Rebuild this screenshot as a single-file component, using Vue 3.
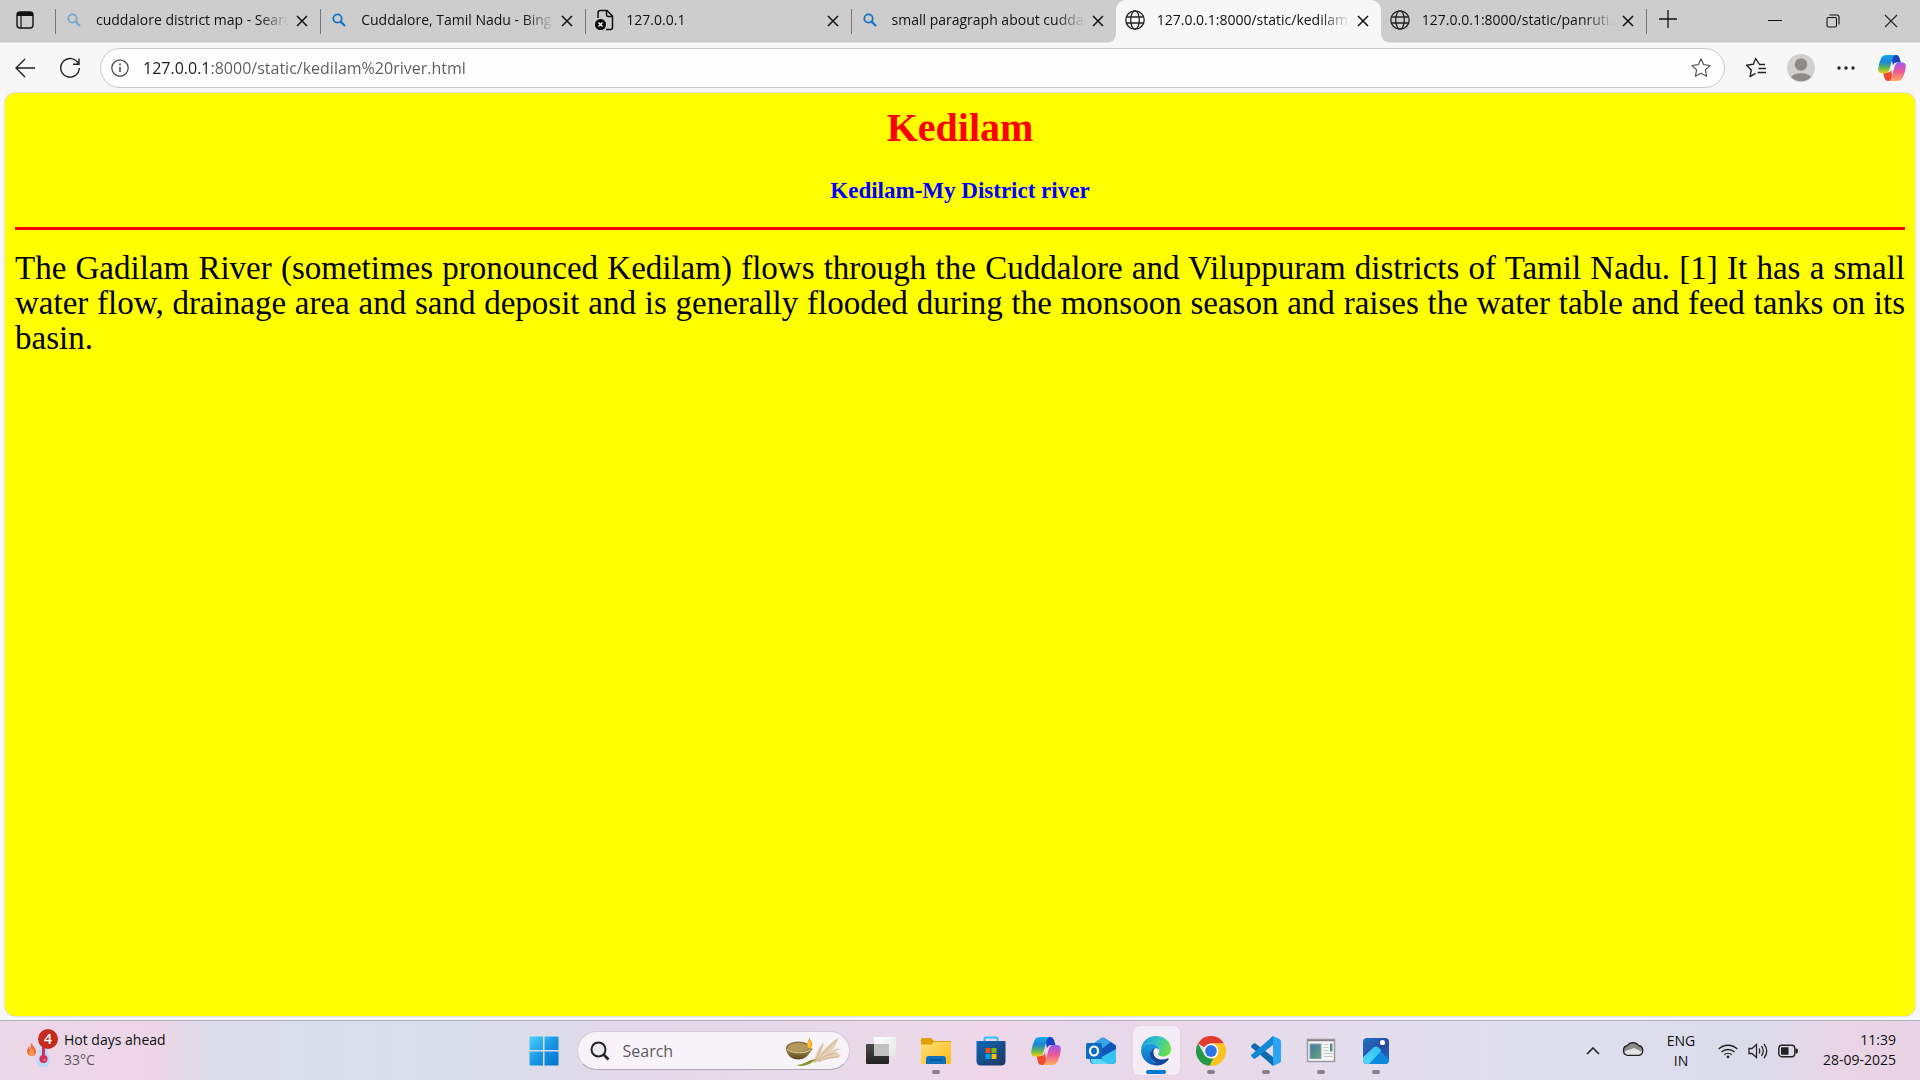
<script setup>
import { ref } from 'vue'

const tabs = [
  { id: 1, title: 'cuddalore district map - Search', icon: 'search', faded: true },
  { id: 2, title: 'Cuddalore, Tamil Nadu - Bing Maps', icon: 'search' },
  { id: 3, title: '127.0.0.1', icon: 'error' },
  { id: 4, title: 'small paragraph about cuddalore', icon: 'search' },
  { id: 5, title: '127.0.0.1:8000/static/kedilam river', icon: 'globe', active: true },
  { id: 6, title: '127.0.0.1:8000/static/panruti.html', icon: 'globe' },
]
const address = ref('127.0.0.1:8000/static/kedilam%20river.html')
const query = ref('')
</script>

<template>
  <div class="desktop">
    <header class="tabstrip">
      <button class="workspace" aria-label="Tab actions">
        <svg width="18" height="18" viewBox="0 0 18 18">
          <rect x="1" y="1" width="16" height="16" rx="3" fill="none" stroke="#111" stroke-width="1.4" />
          <path d="M1 5V4a3 3 0 0 1 3-3h10a3 3 0 0 1 3 3v1z" fill="#111" />
          <path d="M5 5v12" stroke="#111" stroke-width="1.2" />
        </svg>
      </button>
      <div class="tabs">
        <div v-for="tab in tabs" :key="tab.id" class="tab" :class="{ active: tab.active }">
          <button class="tab-main">
            <span class="favicon">
              <svg v-if="tab.icon === 'search'" :class="{ faded: tab.faded }" width="14" height="14" viewBox="0 0 14 14">
                <circle cx="5.5" cy="5.5" r="4.2" fill="none" stroke="#1473c8" stroke-width="1.8" />
                <path d="M8.6 8.6 13 13" stroke="#1473c8" stroke-width="2.2" />
              </svg>
              <svg v-else-if="tab.icon === 'error'" width="20" height="22" viewBox="0 0 20 22">
                <path d="M4 9V4a2.5 2.5 0 0 1 2.500-2.500H13L18.500 7v11.500a2 2 0 0 1-2 2H12M12.500 1.500V5.500a2 2 0 0 0 2 2h4" fill="none" stroke="#111" stroke-width="1.5" />
                <circle cx="6.500" cy="15.500" r="5.500" fill="#000" />
                <path d="m4.500 13.500 4 4m0-4-4 4" stroke="#fff" stroke-width="1.5" />
              </svg>
              <svg v-else width="20" height="20" viewBox="0 0 20 20" fill="none" stroke="#222" stroke-width="1.3">
                <circle cx="10" cy="10" r="9.200" />
                <ellipse cx="10" cy="10" rx="4.300" ry="9.200" />
                <path d="M1.500 7h17M1.500 13h17" />
              </svg>
            </span>
            <span class="title">{{ tab.title }}</span>
          </button>
          <button class="close" aria-label="Close tab">
            <svg width="12" height="12" viewBox="0 0 12 12"><path d="m1 1 10 10M11 1 1 11" stroke="#111" stroke-width="1.5" /></svg>
          </button>
        </div>
      </div>
      <button class="new-tab" aria-label="New tab">
        <svg width="18" height="18" viewBox="0 0 18 18"><path d="M9 0v18M0 9h18" stroke="#111" stroke-width="1.300" /></svg>
      </button>
      <div class="window-controls">
        <button aria-label="Minimize"><svg width="14" height="14" viewBox="0 0 14 14"><path d="M0 6.500h14" stroke="#111" /></svg></button>
        <button aria-label="Restore">
          <svg width="14" height="14" viewBox="0 0 14 14" fill="none" stroke="#111" stroke-width="1.100">
            <rect x="1" y="3.500" width="9.500" height="9.500" rx="1.500" />
            <path d="M3.500 1H11a2 2 0 0 1 2 2v7.500" />
          </svg>
        </button>
        <button aria-label="Close"><svg width="14" height="14" viewBox="0 0 14 14"><path d="m1 1 12 12M13 1 1 13" stroke="#222" stroke-width="1.100" /></svg></button>
      </div>
    </header>

    <nav class="toolbar">
      <button class="nav-button" aria-label="Back">
        <svg width="22" height="20" viewBox="0 0 22 20"><path d="M11 1 2 10l9 9M2 10h19" fill="none" stroke="#222" stroke-width="1.400" /></svg>
      </button>
      <button class="nav-button reload" aria-label="Refresh">
        <svg width="22" height="22" viewBox="0 0 22 22" fill="none" stroke="#222" stroke-width="1.400">
          <path d="M19.500 7A9.300 9.300 0 1 0 20.300 11M20 1.500V7.300h-6" />
        </svg>
      </button>
      <form class="address" @submit.prevent>
        <button type="button" class="plain" aria-label="View site information">
          <svg width="18" height="18" viewBox="0 0 18 18">
            <circle cx="9" cy="9" r="8.200" fill="none" stroke="#444" stroke-width="1.200" />
            <path d="M9 8v5M9 4.500v1.800" stroke="#444" stroke-width="1.500" />
          </svg>
        </button>
        <input v-model="address" class="url" type="text" aria-label="Address" spellcheck="false" />
        <button type="button" class="plain" aria-label="Add to favorites">
          <svg width="22" height="22" viewBox="0 0 22 22"><path d="m11 1.800 2.700 5.900 6.400.8-4.700 4.400 1.200 6.400L11 16.200l-5.600 3.100 1.200-6.400L1.900 8.500l6.400-.8z" fill="none" stroke="#555" stroke-width="1.200" stroke-linejoin="round" /></svg>
        </button>
      </form>
      <div class="tools">
        <button aria-label="Favorites">
          <svg width="22" height="22" viewBox="0 0 22 22" fill="none" stroke="#222" stroke-width="1.400" stroke-linejoin="round">
            <path d="M20 7.500h-5.500L10.700 1.500 8.300 7.300 1.500 8.200l4.800 4.700-1.200 6.700 5.400-3.200M13.500 11.500H21M12.500 15.500H21" />
          </svg>
        </button>
        <button aria-label="Profile">
          <svg width="28" height="28" viewBox="0 0 28 28">
            <circle cx="14" cy="14" r="14" fill="#d2d0ce" />
            <circle cx="14" cy="10.500" r="6.200" fill="#8d8b88" />
            <path d="M4 23a11 6.500 0 0 1 20 0 14 14 0 0 1-20 0z" fill="#8d8b88" />
          </svg>
        </button>
        <button aria-label="Settings and more">
          <svg width="18" height="4" viewBox="0 0 18 4" fill="#222"><circle cx="2" cy="2" r="1.700" /><circle cx="9" cy="2" r="1.700" /><circle cx="16" cy="2" r="1.700" /></svg>
        </button>
        <button class="copilot" aria-label="Copilot"><svg width="28" height="28" viewBox="0 0 30 30"><use href="#copilot-mark" /></svg></button>
      </div>
    </nav>

    <main class="page">
      <h1>Kedilam</h1>
      <h3>Kedilam-My District river</h3>
      <hr />
      <p>
        The Gadilam River (sometimes pronounced Kedilam) flows through the Cuddalore and Viluppuram districts of
        Tamil Nadu. [1] It has a small water flow, drainage area and sand deposit and is generally flooded during the
        monsoon season and raises the water table and feed tanks on its basin.
      </p>
    </main>

    <footer class="taskbar">
      <button class="weather">
        <span class="weather-icon">
          <svg width="34" height="38" viewBox="0 0 34 38">
            <path d="M5 15c1 1 0 3 1 3s0-5 2-6c0 3 4 5 4 8.500S10 25 7.500 25 3 23 3 20.500 4.500 17 5 15z" fill="#f26a3d" />
            <path d="M7.500 17c.5 2 2.500 3 2.500 5s-1 3-2.500 3S5 24 5 22s2-3 2.500-5z" fill="#ffa04a" />
            <path d="M15 24V8a4.500 4.500 0 0 1 9 0v16a7 7 0 1 1-9 0z" fill="#b9daf8" />
            <path d="M18 25V9h3v16z" fill="#d92b58" />
            <circle cx="19.500" cy="28" r="4" fill="#d92b58" />
            <circle cx="20.500" cy="29" r="1" fill="#ffa0b0" />
          </svg>
          <span class="badge">4</span>
        </span>
        <span class="lines"><span>Hot days ahead</span><span class="muted">33°C</span></span>
      </button>

      <div class="apps">
        <button class="app" aria-label="Start">
          <svg width="30" height="30" viewBox="0 0 30 30">
            <defs><linearGradient id="win" x1="0" y1="0" x2="1" y2="1"><stop offset="0" stop-color="#4cd0fb" /><stop offset=".55" stop-color="#1593e2" /><stop offset="1" stop-color="#0272cf" /></linearGradient></defs>
            <path d="M1.500.500H14V14H.500V1.500a1 1 0 0 1 1-1zM15.500.500h13a1 1 0 0 1 1 1V14h-14zM.500 15.500H14v14H1.500a1 1 0 0 1-1-1zM15.500 15.500h14v13a1 1 0 0 1-1 1h-13z" fill="url(#win)" />
          </svg>
        </button>
        <label class="search">
          <svg width="20" height="20" viewBox="0 0 20 20"><circle cx="8.500" cy="8.500" r="7" fill="#e9e9ef" stroke="#222" stroke-width="2" /><path d="m13.500 13.500 5 5" stroke="#222" stroke-width="2.600" /></svg>
          <input v-model="query" type="search" placeholder="Search" aria-label="Search" />
          <svg width="56" height="32" viewBox="0 0 56 32">
            <defs><linearGradient id="bowl" x1="0" y1="0" x2="0" y2="1"><stop offset="0" stop-color="#b79b5c" /><stop offset="1" stop-color="#594618" /></linearGradient></defs>
            <path d="M27 28c3-7 4-16 11-21-1 5-2 8-3 11C39 13 46 7 52 2c0 6-3 10-7 14 4-3 8-3 10-2-3 1-5 2-7 4 3 0 6 1 7 3-9 4-17 2-23 6z" fill="#e7d1b6" />
            <path d="M29 27c3-7 5-12 8-17M31 26c6-9 13-15 20-21M32 26c6-5 14-8 20-8M33 27c7-4 14-5 20-5" fill="none" stroke="#c2a17e" stroke-width=".7" />
            <path d="M10 30c8 0 12-5 20-6-4 4-9 7-16 7z" fill="#879020" />
            <ellipse cx="12.500" cy="13" rx="12.500" ry="6.500" fill="#85713a" />
            <path d="M0 13c0 7 6 11.500 12 11.500S22 21 25 16l2-2-4-2c-5 4-17 5-23 1z" fill="url(#bowl)" />
            <ellipse cx="12" cy="12.500" rx="10" ry="4.500" fill="#b39a5c" />
            <path d="M1 14c6 5 17 5 23 1" fill="none" stroke="#e3d5a0" />
            <path d="M23 2c2 4 4 6 3 9-1 3-4 3-5 0-.5-3 2-5 2-9z" fill="#ff9b12" />
            <path d="M23.500 6c1 3 1 5 0 7-2-2-1-4 0-7z" fill="#ffe04a" />
          </svg>
        </label>
        <button class="app" aria-label="Task view">
          <svg width="30" height="30" viewBox="0 0 30 30">
            <defs>
              <linearGradient id="tvDark" x1="0" y1="0" x2="0" y2="1"><stop offset="0" stop-color="#4c4c4c" /><stop offset="1" stop-color="#222" /></linearGradient>
              <linearGradient id="tvLight" x1="0" y1="0" x2="1" y2="1"><stop offset="0" stop-color="#fff" /><stop offset="1" stop-color="#e4e4e4" /></linearGradient>
            </defs>
            <rect x="0" y="8" width="23" height="20" rx="1" fill="url(#tvDark)" />
            <rect x="8" y="1" width="22" height="19" rx="1" fill="url(#tvLight)" />
            <path d="M8 8h15v12H8z" fill="#c1c1c1" />
          </svg>
        </button>
        <button class="app running" aria-label="File Explorer">
          <svg width="30" height="30" viewBox="0 0 30 30">
            <defs><linearGradient id="folder" x1="0" y1="0" x2="1" y2="1"><stop offset="0" stop-color="#ffdf78" /><stop offset="1" stop-color="#fdbb17" /></linearGradient></defs>
            <path d="M0 3.500Q0 2 1.500 2H10l3 3h17v8H0z" fill="#e0a100" />
            <path d="M0 8.500h10.500L13 6h17v20.500Q30 28 28.500 28h-27Q0 28 0 26.500z" fill="url(#folder)" />
            <path d="M5 28v-5q0-3 3-3h14q3 0 3 3v5z" fill="#0f70bf" />
            <path d="M8.500 24h13" stroke="#0b4f93" stroke-width="1.300" />
          </svg>
        </button>
        <button class="app" aria-label="Microsoft Store">
          <svg width="30" height="30" viewBox="0 0 30 30">
            <defs><linearGradient id="store" x1="0" y1="0" x2="1" y2="1"><stop offset="0" stop-color="#0c69ba" /><stop offset="1" stop-color="#20345e" /></linearGradient></defs>
            <path d="M8.500 7V3q0-1.500 1.500-1.500h10q1.500 0 1.500 1.500v4" fill="none" stroke="#31c1f5" stroke-width="2" />
            <path d="M.500 5h29v20q0 4.500-4.500 4.500H5q-4.500 0-4.500-4.500z" fill="url(#store)" />
            <path d="M9.500 12h5v5h-5z" fill="#f25022" /><path d="M15.500 12h5v5h-5z" fill="#7fba00" />
            <path d="M9.500 18h5v5h-5z" fill="#00a4ef" /><path d="M15.500 18h5v5h-5z" fill="#ffb900" />
          </svg>
        </button>
        <button class="app" aria-label="Copilot">
          <svg width="30" height="30" viewBox="0 0 30 30">
            <defs>
              <linearGradient id="cpA" x1="0" y1="0" x2="0" y2="1"><stop offset="0" stop-color="#18a9ee" /><stop offset=".4" stop-color="#1c86d4" /><stop offset=".72" stop-color="#66b84c" /><stop offset="1" stop-color="#f3cf16" /></linearGradient>
              <linearGradient id="cpB" x1="0" y1="0" x2="0" y2="1"><stop offset="0" stop-color="#9a5cf0" /><stop offset=".5" stop-color="#ef5a94" /><stop offset="1" stop-color="#ffae62" /></linearGradient>
              <g id="copilot-mark">
                <path d="M14 1h5.500q2.500 0 3.300 2.500L24.500 9H20q-3 0-4 3.500z" fill="#1a43c4" />
                <path d="M16 29h-5.500q-2.500 0-3.300-2.500L5.500 20H10q3 0 4-3.500z" fill="#ee4a2e" />
                <path d="M9.500 1h9q-2 .8-2.700 3.300L12.500 16q-1 4-4.500 4.500H4q-4.500 0-3.700-5.500Q1.200 9 3.500 4 5 1 9.500 1z" fill="url(#cpA)" />
                <path d="M20.500 29h-9q2-.8 2.700-3.300L17.500 14q1-4.500 4.500-5h4q4.500 0 3.700 5.500-.9 6-3.200 11Q25 29 20.500 29z" fill="url(#cpB)" />
              </g>
            </defs>
            <use href="#copilot-mark" />
          </svg>
        </button>
        <button class="app" aria-label="Outlook">
          <svg width="30" height="30" viewBox="0 0 30 30">
            <path d="M4 10 15.500 2q1.500-1 3 0L30 9.500V24q0 4-4 4H8q-4 0-4-4z" fill="#1272c8" />
            <path d="M6 9 17 1.500 27 7.500 13 17z" fill="#3aa5ea" />
            <path d="m14 14 11-8 5 4v4L14 24z" fill="#0f55b5" />
            <path d="M30 13 12 23l4 5h10q4 0 4-4z" fill="#35c1f1" />
            <path d="m5 19 18 9H9q-4 0-4-4z" fill="#5cd8fb" />
            <rect x="0" y="7" width="16" height="16" rx="1.500" fill="#0d6cc4" />
            <ellipse cx="8" cy="15" rx="4" ry="4.500" fill="none" stroke="#fff" stroke-width="2.200" />
          </svg>
        </button>
        <button class="app running current" aria-label="Microsoft Edge">
          <svg width="30" height="30" viewBox="0 0 30 30">
            <defs>
              <linearGradient id="edA" x1="0" y1="0" x2="1" y2=".3"><stop offset="0" stop-color="#1796d8" /><stop offset=".5" stop-color="#2fbfcb" /><stop offset="1" stop-color="#67df54" /></linearGradient>
              <linearGradient id="edB" x1="0" y1="0" x2="0" y2="1"><stop offset="0" stop-color="#1ba1de" /><stop offset="1" stop-color="#0b63bd" /></linearGradient>
            </defs>
            <path d="M0 14C0 6 7 0 15 0c9 0 15 6 15 13 0 5-4 7.500-8 7.500-3 0-5-1-5-2.500 0-1 1.500-1.500 1.500-4C18.500 11 15 7.500 10 7.500 5 7.500 1.500 10 0 14z" fill="url(#edA)" />
            <path d="M0 14.500C1.500 9 6 7.500 10 7.500c5 0 8.500 3.500 8.500 6.500-1-2-6-3-8 1-3 6 2 13 9 13.500A15 15 0 0 1 0 14.500z" fill="url(#edB)" />
            <path d="M11 13.500c-3 8 3 13.500 9 13.500 4 0 6-2 7.500-3.500.5-.8 0-1.500-1-1-8 3-14.500-1-14.500-6 0-2 1-3 2-4-1 0-2.500 0-3 1zM12 28c4 3 12 1 15.500-5" fill="#12489b" />
            <path d="M9 16c-1 6 4 12 11 12 4-1 6.500-3 7.500-5-8 4-16 0-15-8z" fill="#12489b" />
          </svg>
        </button>
        <button class="app running" aria-label="Google Chrome">
          <svg width="30" height="30" viewBox="0 0 30 30">
            <path d="M15 15 2 7.500A15 15 0 0 1 28 7.500H15z" fill="#e33b2e" />
            <path d="M15 7.500h13A15 15 0 0 1 15 30l6.500-11.200z" fill="#fcc31e" />
            <path d="M2 7.500 8.500 18.800 15 22.500l2.700-.5L15 30A15 15 0 0 1 2 7.500z" fill="#249a49" />
            <path d="m21.500 18.800-6.500 11.200-1.800-.1 4.300-7.700z" fill="#fcc31e" />
            <circle cx="15" cy="15" r="7.500" fill="#fff" /><circle cx="15" cy="15" r="5.900" fill="#2c76e8" />
          </svg>
        </button>
        <button class="app running" aria-label="Visual Studio Code">
          <svg width="30" height="30" viewBox="0 0 30 30">
            <path d="M22 0 6 15 22 30v-8L12 15l10-7z" fill="#0b7fc7" />
            <path d="M.500 9.500 2.500 7.500q1-.6 2 0L22 21v8.500L.500 11.500q-.8-1 0-2z" fill="#0a6cb0" />
            <path d="M.500 20.500 2.500 22.500q1 .6 2 0L22 9V.500L.500 18.500q-.8 1 0 2z" fill="#1488d2" />
            <path d="m22 0 6.500 3q1.500.8 1.500 2.500v19q0 1.700-1.500 2.500L22 30z" fill="#2ba5f3" />
          </svg>
        </button>
        <button class="app running" aria-label="Window preview">
          <svg width="30" height="30" viewBox="0 0 30 30">
            <defs><linearGradient id="pane" x1="0" y1="0" x2="1" y2="1"><stop offset="0" stop-color="#3f77a7" /><stop offset="1" stop-color="#62a778" /></linearGradient></defs>
            <rect x="1.500" y="3.500" width="27" height="22" fill="#f6f6f6" stroke="#9c98a0" stroke-width="1.500" />
            <path d="M2 4.500h26" stroke="#85818b" stroke-width="1.500" />
            <rect x="4" y="8" width="11" height="14.500" fill="url(#pane)" stroke="#8da0a8" />
            <path d="M17.500 8.500h5M17.500 11.500h5M17.500 14.500h5M17.500 17.500h9M17.500 20.500h9" stroke="#c5c5c8" />
            <path d="M24 7.500h2.500v8H24z" fill="url(#pane)" />
          </svg>
        </button>
        <button class="app running" aria-label="Photos">
          <svg width="30" height="30" viewBox="0 0 30 30">
            <defs>
              <linearGradient id="phA" x1="0" y1="0" x2="1" y2="1"><stop offset="0" stop-color="#1d78cc" /><stop offset=".55" stop-color="#2a4a9f" /><stop offset="1" stop-color="#157bd2" /></linearGradient>
              <linearGradient id="phB" x1="1" y1="0" x2="0" y2="1"><stop offset="0" stop-color="#2cc3f3" /><stop offset="1" stop-color="#5ad8fa" /></linearGradient>
              <clipPath id="phClip"><rect x="2" y="2" width="26" height="26" rx="4" /></clipPath>
            </defs>
            <g clip-path="url(#phClip)">
              <path d="M0 0h30v30H0z" fill="url(#phA)" />
              <path d="m15 11 15 14v5H4z" fill="#1089dc" />
              <path d="M0 23 12.500 11.500q2.500-2 5 0l3 3L7 29H0z" fill="url(#phB)" />
            </g>
            <circle cx="21.500" cy="6.500" r="2.600" fill="#fff" />
          </svg>
        </button>
      </div>

      <div class="tray">
        <button class="overflow" aria-label="Show hidden icons"><svg width="14" height="8" viewBox="0 0 14 8"><path d="m1 7 6-6 6 6" fill="none" stroke="#222" stroke-width="1.600" /></svg></button>
        <button class="cloud" aria-label="OneDrive">
          <svg width="22" height="16" viewBox="0 0 22 16">
            <path d="M5.500 4.500a6.500 6 0 0 1 11 0 5 5 0 0 1 .5 9.800H5.500a5 5 0 0 1 0-9.800z" fill="#8c8c8c" />
            <path d="M2 11.500q1-2 6-3L12 7l8.500 4q-1 3.300-4 3.500H5.500q-3-.3-3.500-3z" fill="#e4e4e4" />
            <path d="M5.500 4.500a6.500 6 0 0 1 11 0 5 5 0 0 1 .5 9.800H5.500a5 5 0 0 1 0-9.800z" fill="none" stroke="#222" stroke-width="1.300" />
          </svg>
        </button>
        <button class="language lines"><span>ENG</span><span>IN</span></button>
        <button class="system" aria-label="Network, volume and battery">
          <svg width="20" height="16" viewBox="0 0 20 16" fill="none" stroke="#222" stroke-width="1.400">
            <path d="M.7 6a13.500 13.500 0 0 1 18.600 0M3.500 9a9.500 9.500 0 0 1 13 0M6.300 11.800a5.500 5.500 0 0 1 7.400 0" /><circle cx="10" cy="13.800" r="1.400" fill="#222" stroke="none" />
          </svg>
          <svg width="20" height="18" viewBox="0 0 20 18" fill="none" stroke="#222" stroke-width="1.300">
            <path d="M1 6.500h3L8.500 2.500v13L4 11.500H1zM11 6.500q1.500 2.500 0 5M13.500 4.200q3.500 4.800 0 9.600M16 1.800q5.500 7.200 0 14.400" />
          </svg>
          <svg width="20" height="14" viewBox="0 0 20 14">
            <rect x=".8" y="1.300" width="16" height="11.400" rx="3" fill="none" stroke="#222" stroke-width="1.400" /><path d="M3 4q0-.8.8-.8H10.500v7.600H3.800q-.8 0-.8-.8zM17.500 4.500h1q1.500 0 1.500 2.500t-1.500 2.500h-1z" fill="#222" />
          </svg>
        </button>
        <button class="clock lines"><span>11:39</span><span>28-09-2025</span></button>
      </div>
    </footer>
  </div>
</template>

<style>
body {
  margin: 0;
}
</style>

<style scoped>
.desktop {
  display: flex;
  flex-direction: column;
  min-height: 100vh;
  background: #f7f7f7;
  font-family: 'Open Sans', 'Noto Sans', sans-serif;
  color: #111;
}
button,
input {
  margin: 0;
  padding: 0;
  border: 0;
  background: none;
  font: inherit;
  color: inherit;
  outline: 0;
}
svg {
  display: block;
  flex: none;
}

/* Tab strip */
.tabstrip {
  display: flex;
  height: 42px;
  background: #cdcdcd;
  border-bottom: 1px solid #e2e2e2;
  font-size: 14px;
}
.workspace {
  display: flex;
  align-items: center;
  flex: none;
  width: 55px;
  padding-left: 16px;
  padding-bottom: 2px;
}
.tabs {
  display: flex;
  flex: 0 1 1592px;
  min-width: 0;
}
.tab {
  position: relative;
  display: flex;
  flex: 1 1 0;
  min-width: 0;
  padding-right: 7px;
}
.tab::before,
.tabs::after {
  content: '';
  flex: none;
  width: 1px;
  height: 25px;
  margin-top: 9px;
  background: #777;
}
.tab-main {
  display: flex;
  align-items: center;
  flex: 1;
  min-width: 0;
  gap: 12px;
  padding-left: 8px;
  padding-bottom: 2px;
  text-align: left;
}
.favicon {
  display: flex;
  justify-content: center;
  flex: none;
  width: 20px;
}
.faded {
  opacity: 0.45;
}
.title {
  flex: 1;
  min-width: 0;
  line-height: 22px;
  overflow: hidden;
  white-space: nowrap;
  mask-image: linear-gradient(to right, #000 calc(100% - 30px), transparent);
}
.close {
  display: flex;
  align-items: center;
  justify-content: center;
  width: 24px;
  padding-left: 2px;
  box-sizing: border-box;
}
.tab.active {
  z-index: 1;
  height: 43px;
  background: #f7f7f7;
  border-radius: 10px 10px 0 0;
}
.tab.active::before,
.tab.active + .tab::before {
  background: transparent;
}
.tab.active::after {
  content: '';
  position: absolute;
  left: -10px;
  right: -10px;
  bottom: 0;
  height: 10px;
  background:
    radial-gradient(circle at 0 0, transparent 10px, #f7f7f7 10px) left / 10px 10px no-repeat,
    radial-gradient(circle at 100% 0, transparent 10px, #f7f7f7 10px) right / 10px 10px no-repeat;
}
.tab.active .close,
.tab.active .tab-main {
  height: 42px;
}
.new-tab {
  display: flex;
  align-items: center;
  padding: 0 12px;
  padding-bottom: 4px;
}
.window-controls {
  display: flex;
  margin-left: auto;
}
.window-controls button {
  display: flex;
  align-items: center;
  justify-content: center;
  width: 58px;
}

/* Toolbar */
.toolbar {
  display: flex;
  align-items: center;
  height: 50px;
}
.nav-button {
  display: flex;
  justify-content: center;
  flex: none;
  width: 50px;
}
.reload {
  width: 40px;
  margin-right: 10px;
}
.address {
  display: flex;
  align-items: center;
  flex: 1;
  height: 40px;
  padding: 0 12px 0 10px;
  box-sizing: border-box;
  border: 1px solid #cacaca;
  border-radius: 20px;
  background: #fdfdfd;
}
.url {
  flex: 1;
  min-width: 0;
  margin: 0 14px;
  font-size: 16px;
  line-height: 24px;
  background: linear-gradient(to right, #1b1b1b 65px, #5c5c5c 65px);
  background-clip: text;
  color: transparent;
}
.tools {
  display: flex;
  align-items: center;
  padding: 0 4px 0 8px;
}
.tools button {
  display: flex;
  justify-content: center;
  width: 45px;
}
.tools .copilot {
  width: 48px;
}

/* Web page */
.page {
  flex: 1;
  margin: 0 5px 4px;
  padding: 0 10px;
  background: #ff0;
  border-radius: 10px;
  box-shadow: 0 0 2px #aaa;
  color: #000;
  font-family: 'Liberation Serif', serif;
}
.page h1 {
  margin: 12px 0 0;
  font-size: 40px;
  line-height: 46px;
  text-align: center;
  color: #f00;
}
.page h3 {
  margin: 27px 0 0;
  font-size: 23px;
  line-height: 26px;
  text-align: center;
  color: #00f;
}
.page hr {
  height: 3px;
  margin: 23px 0 21px;
  border: 0;
  background: #f00;
}
.page p {
  margin: 0;
  font-size: 33px;
  line-height: 35px;
  text-align: justify;
}

/* Taskbar */
.taskbar {
  display: grid;
  grid-template-columns: 1fr auto 1fr;
  height: 59px;
  border-top: 1px solid #b4b0b8;
  background: linear-gradient(
    to right,
    #ead8e9 0%,
    #edd5e6 8%,
    #dddcea 11%,
    #d8dfec 20%,
    #dcdcea 27%,
    #e3d9ea 34%,
    #ebd9e7 48%,
    #efd7e9 52%,
    #e5d9ea 57%,
    #ecd7e8 60%,
    #e4dcec 68%,
    #dfdff0 80%,
    #dcdbea 92%,
    #ead5e6 96%,
    #e8d4e6 100%
  );
  font-size: 14px;
}
.lines {
  display: flex;
  flex-direction: column;
  line-height: 20px;
}
.muted {
  color: #5c555c;
}
.weather {
  display: flex;
  align-items: center;
  justify-self: start;
  gap: 6px;
  padding-left: 24px;
  padding-bottom: 2px;
  text-align: left;
}
.weather-icon {
  position: relative;
  width: 34px;
}
.badge {
  position: absolute;
  top: -2px;
  right: 0;
  width: 20px;
  height: 20px;
  border-radius: 50%;
  background: #c42b1c;
  color: #fff;
  font-size: 14px;
  font-weight: 600;
  line-height: 20px;
  text-align: center;
}
.apps {
  display: flex;
  align-items: center;
}
.app {
  position: relative;
  display: flex;
  align-items: center;
  justify-content: center;
  width: 55px;
  height: 59px;
}
.app svg {
  position: relative;
}
.running::after {
  content: '';
  position: absolute;
  bottom: 6px;
  left: 50%;
  width: 8px;
  height: 4px;
  margin-left: -4px;
  border-radius: 2px;
  background: #8a8088;
}
.current::before {
  content: '';
  position: absolute;
  inset: 5px 4px;
  border-radius: 6px;
  background: #f6ecf5;
  box-shadow: 0 0 1px #c8bcc8;
}
.current::after {
  width: 20px;
  margin-left: -10px;
  background: #0078d4;
}
.search {
  display: flex;
  align-items: center;
  width: 273px;
  height: 39px;
  margin: 0 4px 0 5px;
  padding: 0 7px 0 12px;
  box-sizing: border-box;
  border: 1px solid #d5c8da;
  border-bottom-color: #b0a4b8;
  border-radius: 20px;
  background: #f7f3f9;
}
.search input {
  flex: 1;
  min-width: 0;
  margin-left: 13px;
  font-size: 16px;
  line-height: 24px;
}
.search input::placeholder {
  color: #5d5a60;
  opacity: 1;
}
.tray {
  display: flex;
  align-items: center;
  justify-self: end;
  padding-right: 24px;
}
.overflow {
  padding: 0 13px;
}
.cloud {
  padding: 0 9px 3px;
}
.language {
  width: 56px;
  margin: 0 9px 0 0;
  text-align: center;
}
.system {
  display: flex;
  align-items: center;
  gap: 10px;
}
.clock {
  width: 98px;
  padding-bottom: 2px;
  text-align: right;
  white-space: nowrap;
}
</style>
